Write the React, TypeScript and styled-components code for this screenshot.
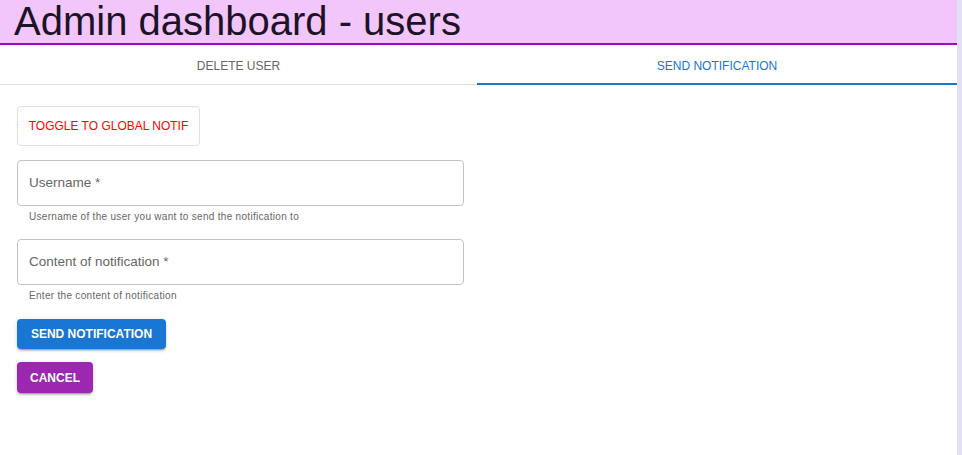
import React, { useState } from "react";
import styled, { createGlobalStyle } from "styled-components";

const Global = createGlobalStyle`
  html, body { margin: 0; padding: 0; background: #e3e0f6; }
  body { font-family: "Liberation Sans", Arial, sans-serif; }
  #root { width: calc(100% - 5px); min-height: 100vh; background: #fff; }
  * { box-sizing: border-box; }
`;

const Page = styled.div`
  display: flex;
  flex-direction: column;
`;

const Header = styled.header`
  height: 45px;
  background: #f2c6fb;
  border-bottom: 2px solid #aa00d4;
  padding-left: 14px;
`;

const Title = styled.h1`
  margin: 0;
  font-size: 40px;
  line-height: 43px;
  font-weight: 400;
  color: #1c1326;
`;

const TabBar = styled.div`
  display: grid;
  grid-template-columns: 477px 1fr;
  height: 40px;
  border-bottom: 1px solid #e0e0e0;
`;

const Tab = styled.button<{ $active?: boolean }>`
  position: relative;
  border: 0;
  background: transparent;
  font-family: "Liberation Sans", Arial, sans-serif;
  font-size: 12px;
  text-transform: uppercase;
  color: ${(p) => (p.$active ? "#1976d2" : "#666")};
  padding: 3px 0 0;
  cursor: pointer;
  &::after {
    content: "";
    display: ${(p) => (p.$active ? "block" : "none")};
    position: absolute;
    left: 0;
    right: 0;
    bottom: -1px;
    height: 2px;
    background: #1976d2;
  }
`;

const Panel = styled.div`
  display: flex;
  flex-direction: column;
  align-items: flex-start;
  padding: 21px 17px;
`;

const OutlineButton = styled.button`
  height: 40px;
  width: 183px;
  border: 1px solid #e0e0e0;
  border-radius: 4px;
  background: #fff;
  color: #ff0000;
  font-family: "Liberation Sans", Arial, sans-serif;
  font-size: 12px;
  padding: 0;
  margin-bottom: 14px;
  cursor: pointer;
`;

const Field = styled.div`
  display: flex;
  flex-direction: column;
  width: 447px;
  margin-bottom: 16px;
`;

const InputBox = styled.div`
  height: 46px;
  border: 1px solid #c4c4c4;
  border-radius: 4px;
  display: flex;
  align-items: center;
  padding: 0 11px 1px;
`;

const Label = styled.span`
  font-size: 13.5px;
  color: #666;
`;

const Helper = styled.span`
  font-size: 10px;
  letter-spacing: 0.3px;
  color: #666;
  padding: 5px 12px 0;
  line-height: 12px;
`;

const FilledButton = styled.button<{ $color: string; $width: number; $height: number }>`
  height: ${(p) => p.$height}px;
  width: ${(p) => p.$width}px;
  border: 0;
  border-radius: 4px;
  background: ${(p) => p.$color};
  color: #fff;
  font-family: "Liberation Sans", Arial, sans-serif;
  font-weight: 700;
  font-size: 12px;
  padding: 0;
  margin-bottom: 13px;
  box-shadow: 0 3px 1px -2px rgba(0,0,0,0.2), 0 2px 2px 0 rgba(0,0,0,0.14), 0 1px 5px 0 rgba(0,0,0,0.12);
  cursor: pointer;
`;

const Actions = styled.div`
  display: flex;
  flex-direction: column;
  align-items: flex-start;
  padding-top: 1px;
`;

export default function App() {
  const [tab, setTab] = useState(1);
  return (
    <Page>
      <Global />
      <Header>
        <Title>Admin dashboard - users</Title>
      </Header>
      <TabBar>
        <Tab $active={tab === 0} onClick={() => setTab(0)}>Delete user</Tab>
        <Tab $active={tab === 1} onClick={() => setTab(1)}>Send notification</Tab>
      </TabBar>
      <Panel>
        <OutlineButton>TOGGLE TO GLOBAL NOTIF</OutlineButton>
        <Field>
          <InputBox>
            <Label>Username *</Label>
          </InputBox>
          <Helper>Username of the user you want to send the notification to</Helper>
        </Field>
        <Field>
          <InputBox>
            <Label>Content of notification *</Label>
          </InputBox>
          <Helper>Enter the content of notification</Helper>
        </Field>
        <Actions>
          <FilledButton $color="#1976d2" $width={149} $height={30}>SEND NOTIFICATION</FilledButton>
          <FilledButton $color="#9c27b0" $width={76} $height={31}>CANCEL</FilledButton>
        </Actions>
      </Panel>
    </Page>
  );
}
